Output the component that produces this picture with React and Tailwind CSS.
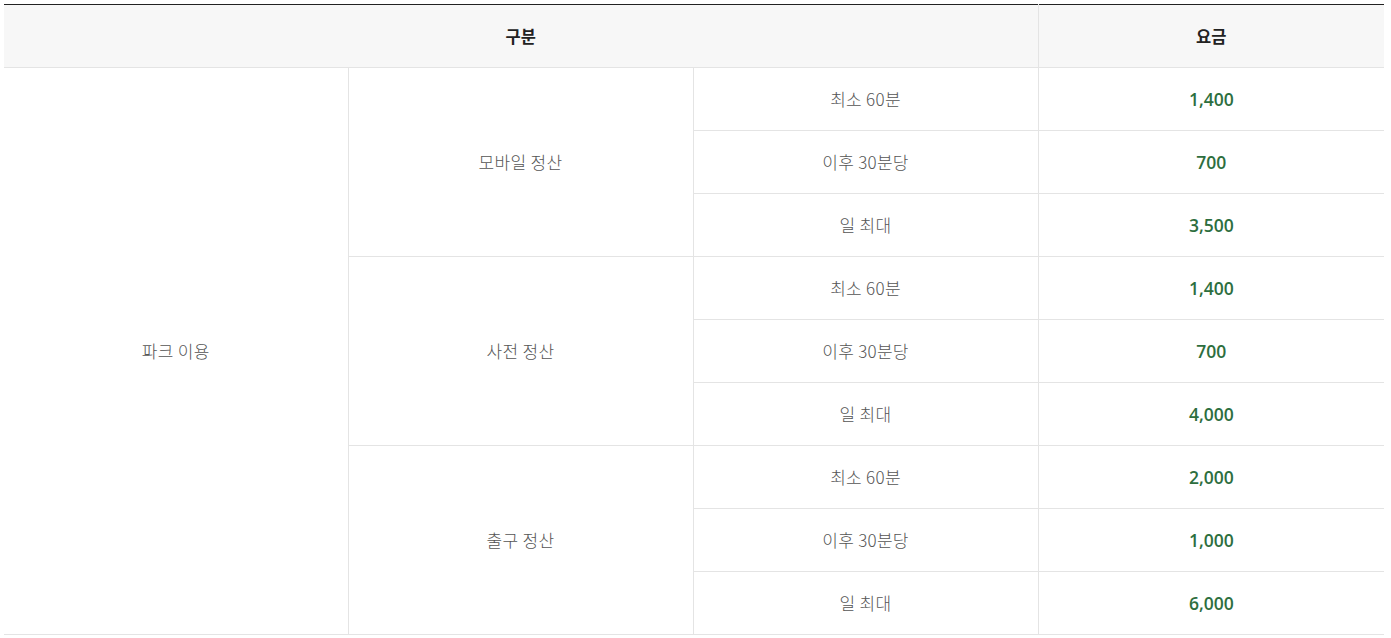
import React from "react";

const groups = [
  {
    name: "모바일 정산",
    rows: [
      { label: "최소 60분", fee: "1,400" },
      { label: "이후 30분당", fee: "700" },
      { label: "일 최대", fee: "3,500" },
    ],
  },
  {
    name: "사전 정산",
    rows: [
      { label: "최소 60분", fee: "1,400" },
      { label: "이후 30분당", fee: "700" },
      { label: "일 최대", fee: "4,000" },
    ],
  },
  {
    name: "출구 정산",
    rows: [
      { label: "최소 60분", fee: "2,000" },
      { label: "이후 30분당", fee: "1,000" },
      { label: "일 최대", fee: "6,000" },
    ],
  },
];

const total = groups.reduce((n, g) => n + g.rows.length, 0);

export default function App() {
  return (
    <div
      className="bg-white px-1 pt-1 pb-1"
      style={{ fontFamily: '"Noto Sans CJK KR", "Noto Sans", sans-serif' }}
    >
      <table className="w-[1380px] table-fixed border-collapse border-t border-t-[#222]">
        <colgroup>
          <col className="w-[344px]" />
          <col className="w-[345px]" />
          <col className="w-[345px]" />
          <col className="w-[346px]" />
        </colgroup>
        <thead>
          <tr className="bg-[#f7f7f7] h-[63px] border-b border-[#e4e4e4]">
            <th colSpan={3} className="text-[16.5px] font-bold text-[#222]">
              구분
            </th>
            <th className="text-[16.5px] font-bold text-[#222] border-l border-[#e4e4e4]">
              요금
            </th>
          </tr>
        </thead>
        <tbody>
          {groups.map((g, gi) =>
            g.rows.map((r, ri) => (
              <tr key={`${gi}-${ri}`} className="h-[63px]">
                {gi === 0 && ri === 0 && (
                  <td
                    rowSpan={total}
                    className="text-center text-[17px] font-light tracking-[0.3px] text-[#555] border-b border-[#e4e4e4]"
                  >
                    파크 이용
                  </td>
                )}
                {ri === 0 && (
                  <td
                    rowSpan={g.rows.length}
                    className="text-center text-[17px] font-light tracking-[0.3px] text-[#555] border border-[#e4e4e4]"
                  >
                    {g.name}
                  </td>
                )}
                <td className="text-center text-[17px] font-light tracking-[0.3px] text-[#555] border border-[#e4e4e4]">
                  {r.label}
                </td>
                <td
                  className="text-center text-[17.5px] font-semibold text-[#2d6e3e] border-y border-l border-[#e4e4e4] pt-px"
                  style={{ fontFamily: '"Open Sans", "Noto Sans", sans-serif' }}
                >
                  {r.fee}
                </td>
              </tr>
            ))
          )}
        </tbody>
      </table>
    </div>
  );
}
